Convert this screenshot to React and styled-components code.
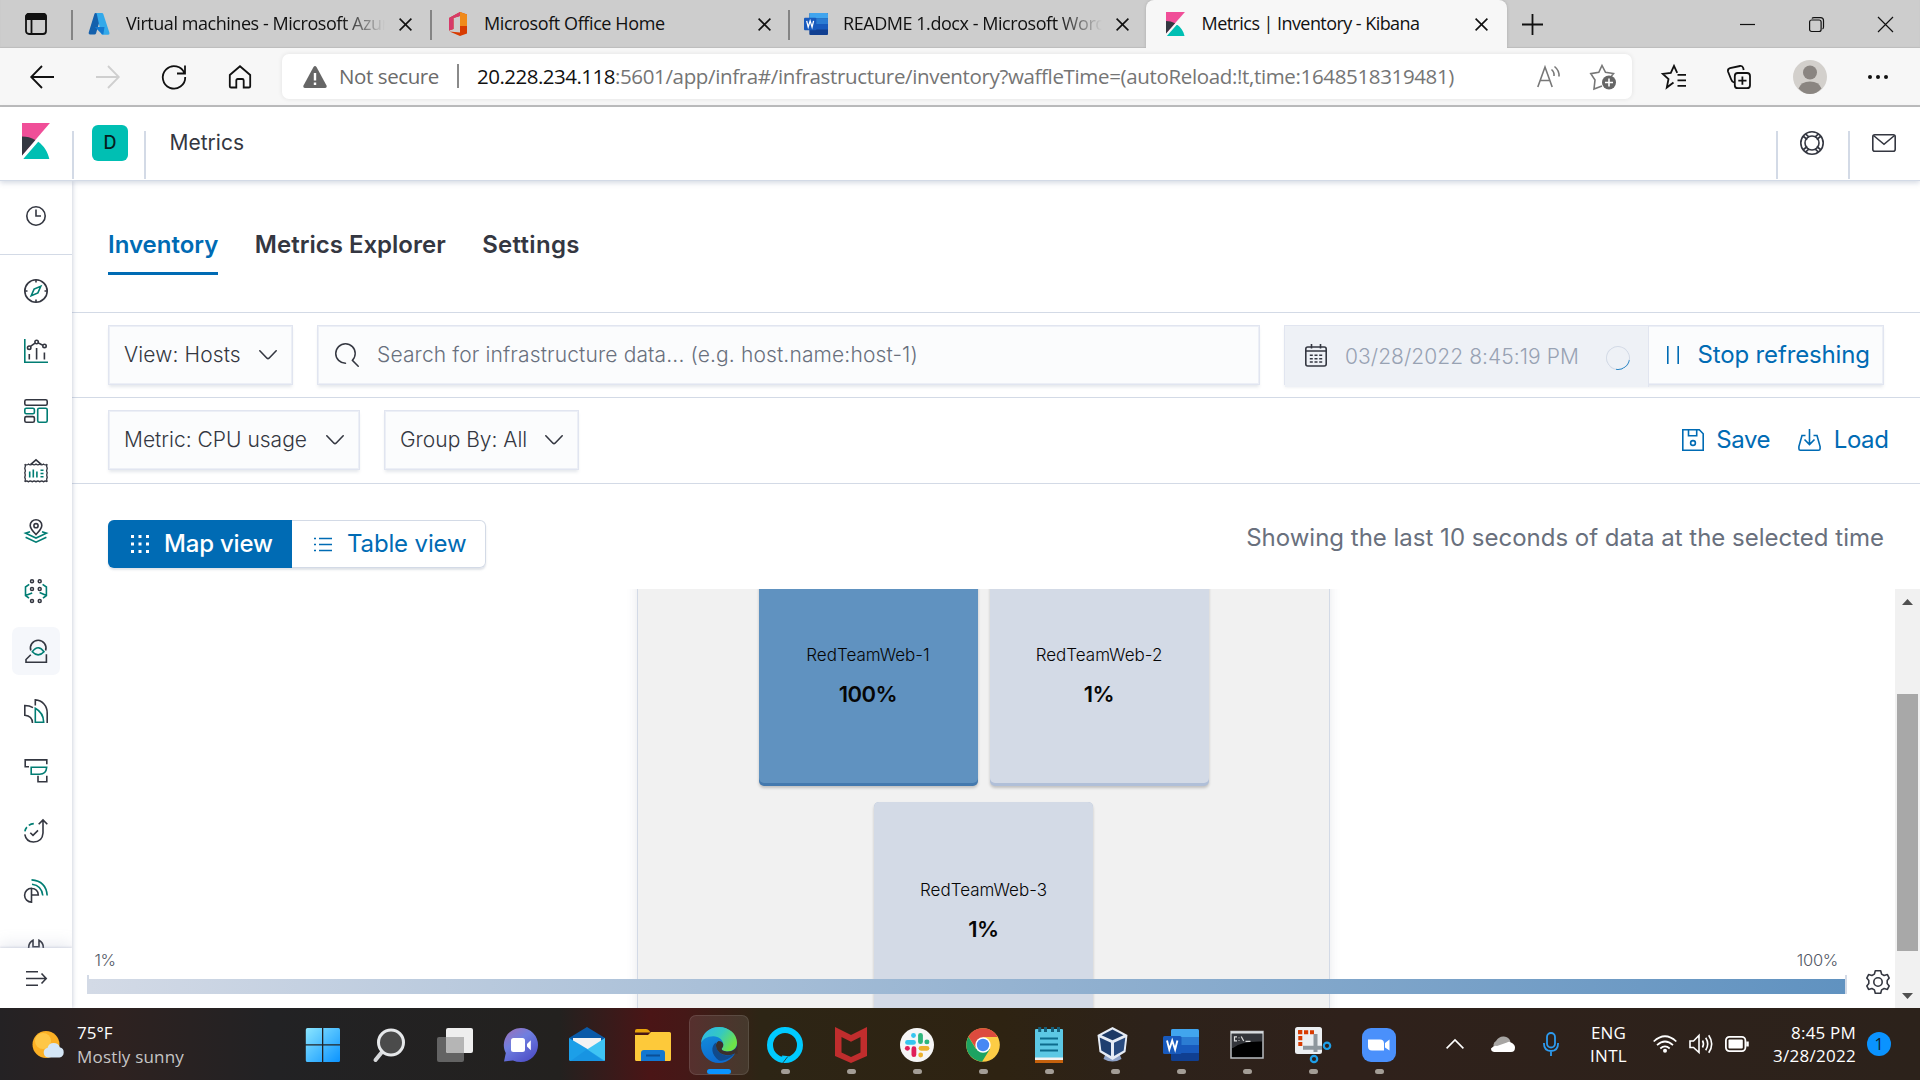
import React from "react";
import styled, { createGlobalStyle, css } from "styled-components";

const INK = "#343741";
const TEAL = "#017d73";
const BLUE = "#006bb4";
const LINE = "#d3dae6";

const GlobalStyle = createGlobalStyle`
  * { box-sizing: border-box; }
  body { margin: 0; background: #fff; overflow: hidden; }
  svg { display: block; flex: none; overflow: visible; }
`;

const Screen = styled.div`
  width: 1920px;
  height: 1080px;
  display: flex;
  flex-direction: column;
  overflow: hidden;
  font-family: Inter, "Liberation Sans", sans-serif;
  color: ${INK};
`;

const Text = styled.span`
  white-space: pre;
  font-size: ${(p) => p.$size || 21}px;
  font-weight: ${(p) => p.$weight || 400};
  letter-spacing: ${(p) => p.$ls || 0}px;
  color: ${(p) => p.$color || "inherit"};
  line-height: 1.3;
`;

/* ---------- browser chrome ---------- */
const TabStrip = styled.div`
  height: 48px;
  flex: none;
  display: flex;
  background: #cdcdcd;
  box-shadow: inset 0 -1px 1px #bdbdbd;
  font-family: "Open Sans", "Noto Sans", sans-serif;
  color: #111;
`;
const TabActions = styled.div`
  width: 71px;
  padding-left: 25px;
  display: flex;
  align-items: center;
`;
const Tab = styled.div`
  width: ${(p) => p.$w}px;
  display: flex;
  align-items: center;
  padding: 0 ${(p) => p.$pr || 18}px 0 ${(p) => p.$pl}px;
  position: relative;
  ${(p) =>
    p.$active
      ? css`
          background: #f7f7f7;
          border-radius: 8px 8px 0 0;
          box-shadow: 0 0 3px #aaa;
          clip-path: inset(0 -3px 0 -3px);
        `
      : css`
          &::before {
            content: "";
            position: absolute;
            left: 0;
            top: 10px;
            width: 2px;
            height: 30px;
            background: #848484;
          }
        `}
`;
const TabTitle = styled.div`
  flex: 1;
  min-width: 0;
  margin: 0 14px 0 ${(p) => p.$ml}px;
  overflow: hidden;
  display: flex;
  ${(p) => p.$fade && "mask-image: linear-gradient(90deg, #000 calc(100% - 44px), transparent 100%);"}
`;
const WindowButtons = styled.div`
  flex: 1;
  display: flex;
  align-items: center;
  padding-left: 15px;
`;
const Caption = styled.div`
  display: flex;
  gap: 54px;
  margin-left: auto;
  padding-right: 27px;
`;
const Toolbar = styled.div`
  height: 59px;
  flex: none;
  display: flex;
  align-items: center;
  background: #f7f7f7;
  border-bottom: 2px solid #bcbcbc;
  padding-left: 30px;
  font-family: "Open Sans", "Noto Sans", sans-serif;
`;
const NavButtons = styled.div`
  width: 252px;
  display: flex;
  gap: 42px;
  align-items: center;
`;
const AddressBar = styled.div`
  width: 1350px;
  height: 45px;
  border-radius: 7px;
  background: #fff;
  box-shadow: 0 0 5px rgba(0, 0, 0, 0.09);
  display: flex;
  align-items: center;
  padding: 0 16px 0 21px;
  color: #6b6b6b;
`;
const Url = styled.div`
  flex: 1;
  display: flex;
  align-items: center;
  margin-left: 12px;
`;
const Bar = styled.i`
  width: 2px;
  height: 24px;
  background: #8a8a8a;
  margin: 0 18px;
`;
const Push = styled.div`
  margin-left: auto;
  display: flex;
  align-items: center;
  gap: 29px;
`;
const ToolbarEnd = styled.div`
  display: flex;
  align-items: center;
  padding-left: 30px;
  gap: 41.3px;
`;

/* ---------- kibana header ---------- */
const Header = styled.header`
  height: 74px;
  flex: none;
  display: flex;
  border-bottom: 1px solid ${LINE};
  background: #fff;
  box-shadow: 0 2px 5px rgba(120, 135, 165, 0.3);
  z-index: 3;
`;
const HeaderCell = styled.div`
  width: ${(p) => p.$w}px;
  display: flex;
  justify-content: center;
  height: 72px;
  align-items: center;
  padding: ${(p) => p.$pad || "0"};
  ${(p) =>
    p.$line &&
    css`
      border-left: 2px solid transparent;
      border-image: linear-gradient(transparent 24px, ${LINE} 24px) 1;
    `}
`;
const Space = styled.div`
  width: 36px;
  height: 36px;
  border-radius: 6px;
  background: #00bfb3;
  color: #06201f;
  display: flex;
  align-items: center;
  justify-content: center;
`;
const Crumb = styled.div`
  flex: 1;
  display: flex;
  align-items: center;
  height: 72px;
  padding-left: 23.5px;
  border-left: 2px solid transparent;
  border-image: linear-gradient(transparent 24px, ${LINE} 24px) 1;
`;

/* ---------- body ---------- */
const Body = styled.div`
  flex: 1;
  min-height: 0;
  display: flex;
`;
const SideNav = styled.nav`
  width: 72px;
  flex: none;
  display: flex;
  flex-direction: column;
  background: #fff;
  box-shadow: 1px 0 4px rgba(120, 135, 165, 0.35);
  z-index: 2;
  overflow: hidden;
  clip-path: inset(0 -8px 0 0);
`;
const Recent = styled.div`
  height: 74px;
  flex: none;
  border-bottom: 1px solid ${LINE};
  display: flex;
  justify-content: center;
  padding: 25px 1px 0 0;
`;
const NavList = styled.div`
  flex: 1;
  min-height: 0;
  overflow: hidden;
  padding-top: 12px;
  display: flex;
  flex-direction: column;
  align-items: center;
  gap: 12px;
`;
const NavItem = styled.div`
  width: 48px;
  height: 48px;
  flex: none;
  border-radius: 7px;
  background: ${(p) => (p.$active ? "#f5f7fb" : "none")};
  display: flex;
  align-items: center;
  justify-content: center;
`;
const NavToggle = styled.div`
  height: 60px;
  flex: none;
  display: flex;
  align-items: center;
  justify-content: center;
  background: #fff;
  box-shadow: 0 -4px 14px rgba(150, 160, 185, 0.22), 0 -1px 2px rgba(150, 160, 185, 0.3);
`;
const Main = styled.main`
  flex: 1;
  min-width: 0;
  display: flex;
  flex-direction: column;
`;
const PageTabs = styled.div`
  height: 132px;
  flex: none;
  border-bottom: 1px solid ${LINE};
  padding: 31px 0 0 36px;
  display: flex;
  gap: 36.5px;
`;
const PageTab = styled.div`
  height: 63px;
  padding-top: 17px;
  color: ${(p) => (p.$active ? BLUE : INK)};
  border-bottom: 3px solid ${(p) => (p.$active ? BLUE : "transparent")};
`;
const ControlRow = styled.div`
  height: ${(p) => p.$h}px;
  flex: none;
  border-bottom: 1px solid ${LINE};
  padding: 12px ${(p) => p.$pr}px 0 36px;
  display: flex;
  align-items: flex-start;
  gap: 24px;
`;
const field = css`
  height: 60px;
  border: 1px solid #e1e5f0;
  box-shadow: inset 0 0 0 1px #eceff6, 0 3px 3px -1px rgba(152, 162, 179, 0.25);
  background: #fbfcfd;
  display: flex;
  align-items: center;
`;
const Select = styled.div`
  ${field}
  width: ${(p) => p.$w}px;
  padding: 0 15.5px 0 15px;
  justify-content: space-between;
`;
const Search = styled.div`
  ${field}
  width: 943px;
  padding-left: 17px;
  gap: 18px;
`;
const DatePicker = styled.div`
  ${field}
  width: 600px;
  margin-left: auto;
`;
const DateValue = styled.div`
  width: 364px;
  height: 61px;
  align-self: flex-start;
  background: #eef1f6;
  display: flex;
  align-items: center;
  padding: 0 18px 2px 20px;
  gap: 18px;
  border-right: 1px solid #e1e5f0;
  & > span { margin-top: 3px; }
`;
const Spinner = styled.i`
  width: 24px;
  height: 24px;
  border-radius: 50%;
  border: 1.5px solid #d3dae6;
  border-bottom-color: #2b86c5;
  transform: rotate(-35deg);
  margin: 4px 0 0 auto;
`;
const StopButton = styled.div`
  flex: 1;
  display: flex;
  align-items: center;
  padding-left: 18px;
  gap: 18.5px;
  color: ${BLUE};
`;
const LinkButtons = styled.div`
  height: 60px;
  margin-left: auto;
  display: flex;
  align-items: center;
  color: ${BLUE};
  gap: 28px;
`;
const LinkButton = styled.div`
  display: flex;
  align-items: center;
  gap: 12.5px;
`;
const ViewRow = styled.div`
  height: 105px;
  flex: none;
  display: flex;
  padding: 36px 36px 0 36px;
  justify-content: space-between;
`;
const ButtonGroup = styled.div`
  height: 48px;
  width: 378px;
  display: flex;
  border-radius: 6px;
  overflow: hidden;
  box-shadow: inset 0 0 0 1px ${LINE}, 0 2px 2px rgba(152, 162, 179, 0.3);
`;
const GroupButton = styled.div`
  width: ${(p) => p.$w}px;
  display: flex;
  align-items: center;
  gap: 15px;
  padding-left: ${(p) => p.$pl}px;
  background: ${(p) => (p.$on ? BLUE : "transparent")};
  color: ${(p) => (p.$on ? "#fff" : BLUE)};
`;
const Hint = styled.div`
  padding-top: 2px;
  color: #69707d;
`;

/* ---------- waffle map ---------- */
const MapArea = styled.div`
  flex: 1;
  min-height: 0;
  display: flex;
  position: relative;
`;
const MapScroll = styled.div`
  flex: 1;
  overflow: hidden;
  display: flex;
  justify-content: center;
`;
const Group = styled.div`
  width: 693px;
  height: 620px;
  margin-top: -60px;
  padding: 37px 120px 0;
  background: #f1f1f1;
  border: 1px solid ${LINE};
  box-shadow: 0 0 10px rgba(120, 130, 150, 0.18);
  display: flex;
  flex-wrap: wrap;
  justify-content: center;
  align-content: flex-start;
  gap: 16px 12px;
`;
const Node = styled.div`
  width: 219px;
  height: 219px;
  border-radius: 5px;
  background: ${(p) => p.$edge};
  box-shadow: 0 2px 3px rgba(0, 0, 0, 0.2);
  padding-bottom: 3px;
`;
const NodeFace = styled.div`
  height: 216px;
  border-radius: 5px;
  background: ${(p) => p.$fill};
  color: #060606;
  display: flex;
  flex-direction: column;
  align-items: center;
  padding-top: 77px;
  gap: 14px;
`;
const ScrollTrack = styled.div`
  width: 25px;
  background: #f1f1f1;
  display: flex;
  flex-direction: column;
  align-items: center;
  padding: 10px 0 9px;
`;
const Thumb = styled.div`
  width: 21px;
  height: 257px;
  margin: 89px 0 auto;
  background: #a8a8a8;
`;
const Legend = styled.div`
  position: absolute;
  left: 15px;
  bottom: 14px;
  width: 1804px;
  display: flex;
  align-items: flex-end;
  gap: 19px;
`;
const Scale = styled.div`
  width: 1760px;
`;
const ScaleLabels = styled.div`
  display: flex;
  justify-content: space-between;
  padding: 0 9px 4px 7.5px;
  color: #535966;
`;
const ScaleBar = styled.div`
  height: 19px;
  border: 2px solid ${LINE};
  border-width: 0 2px;
  padding-top: 4px;
  &::after {
    content: "";
    display: block;
    height: 15px;
    background: linear-gradient(90deg, #d3dae6, #92b1d0 55%, #6092c0);
  }
`;

/* ---------- taskbar ---------- */
const Taskbar = styled.footer`
  height: 72px;
  flex: none;
  display: flex;
  background: linear-gradient(
    90deg,
    #242224 0,
    #2e2220 110px,
    #222224 270px,
    #23211f 560px,
    #4a1516 650px,
    #451817 685px,
    #2d2515 760px,
    #2e2312 1000px,
    #2d221a 1150px,
    #2f211b 1350px,
    #2c221b 1920px
  );
  font-family: "Open Sans", "Noto Sans", sans-serif;
  color: #fff;
`;
const Weather = styled.div`
  width: 290px;
  display: flex;
  align-items: center;
  padding: 1px 0 0 31px;
  gap: 12px;
`;
const Lines = styled.div`
  display: flex;
  flex-direction: column;
  align-items: ${(p) => p.$align || "flex-start"};
  & > span { line-height: ${(p) => p.$lh || 23}px; }
`;
const Apps = styled.div`
  display: flex;
`;
const TaskApp = styled.div`
  width: 66px;
  padding: 7px 3px 5px;
`;
const AppTile = styled.div`
  width: 60px;
  height: 60px;
  border-radius: 7px;
  display: flex;
  flex-direction: column;
  align-items: center;
  padding-top: 12px;
  gap: 6px;
  ${(p) => p.$focus && "background: rgba(255,255,255,.1); box-shadow: inset 0 0 0 1px rgba(255,255,255,.1);"}
`;
const Glyph = styled.div`
  height: 36px;
  display: flex;
  align-items: center;
`;
const Pip = styled.i`
  width: ${(p) => (p.$focus ? 24 : 9)}px;
  height: 5px;
  border-radius: 3px;
  background: ${(p) => (p.$focus ? "#0a93ff" : "#a39d96")};
`;
const Tray = styled.div`
  flex: 1;
  display: flex;
  align-items: center;
  padding-left: 34px;
`;
const TrayItem = styled.div`
  margin-left: ${(p) => p.$ml}px;
`;
const Badge = styled.div`
  width: 24px;
  height: 24px;
  margin-left: 11px;
  border-radius: 50%;
  background: #0a93ff;
  color: #10202c;
  display: flex;
  align-items: center;
  justify-content: center;
`;

/* ---------- icons ---------- */
const Svg = ({ w = 24, h = w, c = INK, sw = 1.6, children }) => (
  <svg width={w} height={h} viewBox={`0 0 ${w} ${h}`} fill="none" stroke={c} strokeWidth={sw}>
    {children}
  </svg>
);

const KibanaLogo = ({ w, h }) => (
  <svg width={w} height={h} viewBox="4 0 25 32" preserveAspectRatio="none">
    <path fill="#f04e98" d="M4 0v28.789L28.935.017z" />
    <path fill="#343741" d="M4 12v16.789l11.906-13.738A24.721 24.721 0 004 12" />
    <path fill="#00bfb3" d="M18.479 16.664L6.268 30.754l-1.073 1.237h23.191c-1.252-6.292-4.883-11.719-9.908-15.327" />
  </svg>
);

const Chevron = () => (
  <Svg w={18} h={10} sw={1.6}>
    <path d="M.8.8 8 8.2q1 .9 2 0L17.2.8" strokeLinecap="round" />
  </Svg>
);

const Close = () => (
  <Svg w={13} c="#111" sw={1.6}>
    <path d="M.6.6l11.8 11.8M12.4.6L.6 12.4" />
  </Svg>
);

const WordLogo = ({ w, h }) => (
  <svg width={w} height={h} viewBox="0 0 36 32" preserveAspectRatio="none">
    <rect x="8" width="28" height="32" rx="1.5" fill="#103f91" />
    <path d="M8 1.5Q8 0 9.500 0h25Q36 0 36 1.500V8H8z" fill="#41a5ee" />
    <path d="M8 8h28v8H8z" fill="#2b7cd3" />
    <path d="M8 16h28v8H8z" fill="#185abd" />
    <rect y="7" width="18.500" height="18" rx="1.500" fill="#185abd" />
    <path d="M4 11.500l2.300 9 2.900-9 2.900 9 2.300-9" stroke="#fff" strokeWidth="1.900" fill="none" />
  </svg>
);

const navIcons = [
  <Svg key="discover">
    <circle cx="12" cy="12" r="11.200" />
    <path d="M12 .8v2.700M12 20.500v2.700M.8 12h2.700M20.500 12h2.700" />
    <path stroke={TEAL} d="M16.800 7.200l-2.900 6.700-6.700 2.900 2.900-6.700z" />
  </Svg>,
  <Svg key="visualize">
    <path stroke={TEAL} d="M.8 0v23.200H24" />
    <path d="M5.300 15v5.500M12.600 9v11.500M20.400 13.500v7M6.500 7.300l4.500-3.200M14.200 3.900l4.600 2.400" />
    <circle cx="5.200" cy="8.700" r="1.700" />
    <circle cx="12.600" cy="3" r="1.700" />
    <circle cx="20.500" cy="6.900" r="1.700" />
  </Svg>,
  <Svg key="dashboard">
    <rect x=".8" y=".8" width="22.400" height="5.400" rx="1.500" />
    <rect x=".8" y="9.200" width="9.600" height="5.600" rx="1.500" stroke={TEAL} />
    <rect x="13.700" y="9.200" width="9.500" height="14" rx="1.500" stroke={TEAL} />
    <rect x=".8" y="17.600" width="9.600" height="5.600" rx="1.500" />
  </Svg>,
  <Svg key="canvas">
    <path d="M6.500 5.700L12 .9l5.500 4.800" />
    <path d="M.8 5.200q1.800 1.300 3.600 0 1.900 1.300 3.800 0 1.900 1.300 3.800 0 1.900 1.300 3.800 0 1.900 1.300 3.800 0 1.800 1.300 3.600 0-1.300 2 0 4-1 2.300 0 4.600-1 2.300 0 4.600-1.300 2 0 4.400-1.800-1.500-3.600 0-1.900-1.500-3.800 0-1.900-1.500-3.800 0-1.900-1.500-3.800 0-1.900-1.500-3.800 0-1.800-1.500-3.600 0 1.300-2.400 0-4.400 1-2.300 0-4.600 1-2.300 0-4.600 1.300-2 0-4z" strokeWidth="1.400" />
    <path stroke={TEAL} d="M5.700 12.500v6M9.300 10.500v8M12.900 12.500v6M16.500 11.200h3M16.500 14.500h3M16.500 17.700h3" />
  </Svg>,
  <Svg key="maps">
    <path d="M12 15.500C8.500 12 6.200 9.400 6.200 6.500a5.800 5.800 0 0111.600 0c0 2.900-2.300 5.500-5.800 9z" />
    <circle cx="12" cy="6.700" r="2.100" />
    <path stroke={TEAL} d="M6 12.800L1.600 14.200 12 19l10.400-4.800L18 12.800M1.600 18.200L12 23.200l10.400-5" />
  </Svg>,
  <Svg key="ml">
    {[2.3, 10, 22].map((y) =>
      [8, 15.7].map((x) => <circle key={x + "-" + y} cx={x} cy={y} r="1.500" strokeWidth="1.500" />)
    )}
    <path stroke={TEAL} d="M5.200 5.300L1.500 8v8.500L5 19.200M1.500 16.500l6.700-2.600M18.600 5.300L22.400 8v8.500L19 19.200M22.400 16.500L15.600 13.500" />
  </Svg>,
  <Svg key="metrics">
    <path d="M6.800 11.500A7.800 7.800 0 1121.600 11.500M6.800 15.800l-4.800 4.700v2.700h20.400V15.300" />
    <path stroke={TEAL} d="M8.300 12.700q5.900-8 11.700 0-5.800 6.300-11.700 0z" />
  </Svg>,
  <Svg key="logs">
    <path d="M9 8.600Q5.500 6.500.8 6.500v9.800Q8.300 17 8.500 24M11.300 6.500V.9C18.500 1.300 23.200 7 23.200 14v10" />
    <path stroke={TEAL} d="M11.300 9.300q8.200 4.500 8.400 13.900h-8.400z" />
  </Svg>,
  <Svg key="apm">
    <path d="M5 7.800H1.200V.9h21.600v4.300M14 16.800v6h8.800v-6" />
    <path stroke={TEAL} d="M7.200 8.200h15.500q-.5 7-7.200 7H7.200z" />
  </Svg>,
  <Svg key="uptime">
    <path d="M14.700 5.300L19 1l4.300 4.300M19 1v13q-.6 8.800-9.500 9Q2 22.600.8 15.300M6.300 13.700l2.700 2.700 5-5" />
    <path stroke={TEAL} d="M.9 12.300q.5-2.500 2-4.200M4.800 6.400Q7 4.800 9.800 4.600" />
  </Svg>,
  <Svg key="siem">
    <path d="M7.500 9.300a6.800 6.800 0 100 13.800zM7.500 9.300q6.500.5 6.800 6.700H7.500" />
    <path stroke={TEAL} d="M7.500.9Q22 2 23.200 16.500M8 5.200q9.700 1.200 10.800 11.300" />
  </Svg>,
  <Svg key="management">
    <path d="M5 12q-1.500-8 4-10.700v6.400h6V1.300q5.500 2.700 4 10.700" />
  </Svg>,
];

const appIcons = [
  /* start */
  <svg key="start" width="36" height="36" viewBox="0 0 36 36">
    <defs>
      <linearGradient id="win" x2="1" y2="1"><stop stopColor="#8be6ff" /><stop offset="1" stopColor="#0a93ff" /></linearGradient>
    </defs>
    <path fill="url(#win)" d="M2.500 1H17v16.200H.8V2.700Q.8 1 2.500 1zM18.300 1h15.200q1.500 0 1.500 1.700v14.500H18.300zM.8 18.600H17V35H2.500Q.8 35 .8 33.500zM18.300 18.600H35v14.900q0 1.500-1.500 1.500H18.300z" />
  </svg>,
  /* search */
  <svg key="search" width="36" height="36" viewBox="0 0 36 36">
    <path d="M11 25L4.500 33" stroke="#d6d8da" strokeWidth="4" strokeLinecap="round" />
    <circle cx="20" cy="15.500" r="12.500" fill="#4b4b4b" stroke="#e6e8ea" strokeWidth="3" />
  </svg>,
  /* task view */
  <svg key="tasks" width="36" height="36" viewBox="0 0 36 36">
    <rect x="0" y="10" width="27" height="25" rx="2" fill="#636363" />
    <rect x="9" y="1" width="27" height="25" rx="2" fill="#eee" />
    <path d="M9 10h18v16H11q-2 0-2-2z" fill="#b5b5b5" />
  </svg>,
  /* chat */
  <svg key="chat" width="36" height="36" viewBox="0 0 36 36">
    <defs>
      <linearGradient id="cht" x2=".7" y2="1"><stop stopColor="#a06fb5" /><stop offset=".45" stopColor="#6f7fe0" /><stop offset="1" stopColor="#4f50c8" /></linearGradient>
    </defs>
    <path fill="url(#cht)" d="M18 1a17 17 0 110 34q-4.500 0-8-1.500L1 34.500 2.800 26A17 17 0 0118 1z" />
    <rect x="8" y="11" width="14" height="14" rx="2.500" fill="#fff" />
    <path d="M24 17l3.800-3.800v10L24 19.500z" fill="#fff" />
  </svg>,
  /* mail */
  <svg key="mail" width="36" height="36" viewBox="0 0 36 36">
    <path d="M0 11L18 0l18 11v6H0z" fill="#0a5aa8" />
    <path d="M4 11h28v8L18 26 4 19z" fill="#f3f3f3" />
    <path d="M0 11l36 21.500q0 1.500-1.500 1.500h-33Q0 34 0 32.500z" fill="#1c9fe8" />
    <path d="M36 11L18 22.500 34.500 34q1.500 0 1.500-1.500z" fill="#3fc4f4" />
    <path d="M18 22.300L36 34H1.500z" fill="#1590e0" opacity=".7" />
  </svg>,
  /* files */
  <svg key="files" width="36" height="36" viewBox="0 0 36 36">
    <path d="M0 4q0-2 2-2h9q2 0 3.500 2l1 1.500H0z" fill="#e8a30a" />
    <path d="M0 8h13l3-3h18.500q1.500 0 1.500 1.500v26q0 1.500-1.500 1.500h-33Q0 34 0 32.500z" fill="#fdc93a" />
    <path d="M6 34v-8q0-3 3-3h18q3 0 3 3v8z" fill="#1277d1" />
    <path d="M11 28.500h14" stroke="#0b4f96" strokeWidth="2" />
  </svg>,
  /* edge */
  <svg key="edge" width="36" height="36" viewBox="0 0 36 36">
    <defs>
      <linearGradient id="e1" x2="1" y2=".5"><stop stopColor="#2cb4ee" /><stop offset=".55" stopColor="#35c9c0" /><stop offset="1" stopColor="#6ee348" /></linearGradient>
      <linearGradient id="e2" x2=".3" y2="1"><stop stopColor="#1494dd" /><stop offset="1" stopColor="#0d6cd0" /></linearGradient>
    </defs>
    <circle cx="18" cy="18" r="18" fill="url(#e2)" />
    <path d="M0 16C1 6 9 0 18 0c10 0 18 7 18 15.500C36 21 32 24.500 27 24.500c-3.500 0-6.300-1-6.300-2.500 0-1 1.600-1.500 1.600-4.300 0-4.500-4.300-8.400-10-8.400C6 9.300 1.500 12.500 0 16z" fill="url(#e1)" />
    <path d="M15 15.500C9.500 19 10 28 18 33.500q7 1.500 15.500-6.500-5.500 2.600-11.500.6c-5-1.700-7.600-6.500-7-12.100z" fill="#114a8b" />
    <path d="M36.500 17v9.700l-2.700-.2q-5 2.800-11.500.9c-5-1.500-7.500-5.500-7.300-9.700q.3-2.600 2.500-3.600 4.500.3 4.800 3.600c0 2.800-1.600 3.300-1.600 4.300 0 1.500 2.800 2.500 6.300 2.500 5 0 9-3.500 9.500-7.500z" fill="#3b302b" />
  </svg>,
  /* alexa */
  <svg key="alexa" width="36" height="36" viewBox="0 0 36 36">
    <circle cx="18" cy="18" r="15" fill="none" stroke="#00caff" strokeWidth="6" />
    <path d="M15 28.500l7 .8-5.800 6.800z" fill="#00caff" />
    <path d="M20.800 29.500L15.900 35.900" stroke="#2d2515" strokeWidth=".8" />
  </svg>,
  /* mcafee */
  <svg key="mcafee" width="36" height="36" viewBox="0 0 36 36">
    <path fill="#c02d2d" fillRule="evenodd" d="M2 0l16 8 16-8v29l-16 7-16-7zM8.500 10v15.500L18 30l9.500-4.500V10L18 14.800z" />
  </svg>,
  /* slack */
  <svg key="slack" width="36" height="36" viewBox="0 0 36 36">
    <circle cx="18" cy="18" r="17" fill="#f6f6f6" />
    <g fill="none" strokeWidth="4.800" strokeLinecap="round">
      <path d="M8.500 15.400h6" stroke="#36c5f0" /><path d="M14.500 8.300v.2" stroke="#36c5f0" />
      <path d="M21.500 8.300v6.400" stroke="#2eb67d" /><path d="M28 14.900h-.2" stroke="#2eb67d" />
      <path d="M14.900 21.700v6" stroke="#e01e5a" /><path d="M8.300 21.300h.2" stroke="#e01e5a" />
      <path d="M22 21.300h6" stroke="#ecb22e" /><path d="M21.700 27.900v.1" stroke="#ecb22e" />
    </g>
  </svg>,
  /* chrome */
  <svg key="chrome" width="36" height="36" viewBox="0 0 36 36">
    <circle cx="18" cy="18" r="16.800" fill="#fdcc45" />
    <path d="M3.400 9.700A16.800 16.800 0 0132.700 10H18l-6.500 12z" fill="#dd4b3e" />
    <path d="M3.400 9.700a16.800 16.800 0 0013.600 25L25 22H11z" fill="#1da362" />
    <circle cx="18" cy="18" r="7.700" fill="#fff" />
    <circle cx="18" cy="18" r="6.200" fill="#4688f4" />
  </svg>,
  /* notepad */
  <svg key="notepad" width="36" height="36" viewBox="0 0 36 36">
    <path d="M4 31h28v5H4z" fill="#c4610c" />
    <path d="M4 30h28v3H4z" fill="#f3f3f3" />
    <path d="M4 3q0-1 1-1h26q1 0 1 1v27.500H4z" fill="#5cc8e4" />
    <path d="M9 11.500h18M9 17.500h18M9 23.500h18" stroke="#0c6b8c" strokeWidth="2" />
    <path d="M8.700 0v5M14.500 0v5M21.500 0v5M27.500 0v5" stroke="#14607c" strokeWidth="3" />
  </svg>,
  /* virtualbox */
  <svg key="vbox" width="36" height="36" viewBox="2.500 0 36 36">
    <path d="M11 27h14l2 5q-9 5-18 0z" fill="#8fa3c8" />
    <path d="M18 0l15 8-2 17-13 8L5 25 3 8z" fill="#e6ecf5" />
    <path d="M18 2.500l11 5.700-11 5-11-5z" fill="#1d3a66" />
    <path d="M5.200 10.500l11.300 5.300V29L6.800 23.500z" fill="#1f3f70" />
    <path d="M30.800 10.500l-11.300 5.300V29l9.700-5.500z" fill="#2a4c80" />
  </svg>,
  <WordLogo key="word" w={36} h={32} />,
  /* terminal */
  <svg key="cmd" width="36" height="36" viewBox="0 0 36 36">
    <rect x="2" y="4.500" width="32" height="26.500" fill="#000" stroke="#b8bcc0" strokeWidth="1.500" />
    <path d="M3 6.500h30v8Q12 14 4 21H3z" fill="#33353a" />
    <path d="M2 5.500h32" stroke="#d8dcdf" strokeWidth="2.200" />
    <path d="M8 9.800H5.500v4H8M10 10.500v.8M10 13v.8M12.200 9.500l2.500 4.500M16.500 14.300h5" stroke="#ddd" strokeWidth="1.200" fill="none" />
  </svg>,
  /* snip */
  <svg key="snip" width="36" height="36" viewBox="0 0 36 36">
    <rect x="0" y="0" width="27" height="27" rx="2.500" fill="#eceff2" />
    <path d="M3 5.300h16M5.300 3v16" stroke="#d83b01" strokeWidth="4" strokeDasharray="4.200 1.800" />
    <path d="M20.500 7v18M8 20.700h19" stroke="#8e979e" strokeWidth="4" />
    <circle cx="32" cy="18.800" r="3.200" fill="none" stroke="#1e9fe8" strokeWidth="2.200" />
    <circle cx="19" cy="32" r="3.200" fill="none" stroke="#1e9fe8" strokeWidth="2.200" />
  </svg>,
  /* zoom */
  <svg key="zoom" width="36" height="36" viewBox="0 0 36 36">
    <rect x="1" y="1" width="34" height="34" rx="9" fill="#4a90fb" />
    <path d="M7 12.500h12q4 0 4 4v7H11q-4 0-4-4zM24 16l4.500-3.500v11L24 20.500z" fill="#fff" />
  </svg>,
];

const Tile = ({ name, value, fill, edge }) => (
  <Node $edge={edge}>
    <NodeFace $fill={fill}>
      <Text $size={17} $weight={350}>{name}</Text>
      <Text $size={22} $weight={600} $ls={-0.5}>{value}</Text>
    </NodeFace>
  </Node>
);

export default function App() {
  return (
    <Screen>
      <GlobalStyle />
      <TabStrip>
        <TabActions>
          <Svg w={22} c="#111" sw={1.8}>
            <rect x="1" y="1" width="20" height="20" rx="3" />
            <path d="M1 4.500Q1 1 4 1h14q3 0 3 3.500V6H1z" fill="#111" />
            <path d="M6.500 6v15" />
          </Svg>
        </TabActions>
        <Tab $w={359} $pl={17}>
          <svg width="22" height="22" viewBox="0 0 22 22">
            <path d="M7.500 0h6.500L8 20.500q-.4 1-1.500 1H2Q.3 21.300.7 19.500L6.400 1Q6.700 0 7.500 0z" fill="#1460ac" />
            <path d="M14 0q1 0 1.300 1l6.200 19q.2 1.500-1.200 1.700h-5.500q-1.300 0-1.800-1.200L8.800 1Q8.500 0 7.500 0z" fill="#33a9ea" />
            <path d="M16.500 14H6.800l6.500 6.500q1 1 2 1.100z" fill="#1478cf" />
          </svg>
          <TabTitle $ml={16} $fade>
            <Text $size={18} $ls={-0.45}>Virtual machines - Microsoft Azure</Text>
          </TabTitle>
          <Close />
        </Tab>
        <Tab $w={358} $pl={18.5} $pr={17}>
          <svg width="18" height="24" viewBox="0 0 18 24">
            <path d="M0 6L11 0l7 2.500v19L11 24 .5 19.500 11 20.500V4L4.500 6v11L0 18.500z" fill="#d83b01" />
            <path d="M0 6L11 0v4L4.500 6v11L0 18.500z" fill="#d63a6a" />
            <path d="M11 0l7 2.500V14h-7z" fill="#f08a1a" />
          </svg>
          <TabTitle $ml={17.5}>
            <Text $size={18} $ls={-0.4}>Microsoft Office Home</Text>
          </TabTitle>
          <Close />
        </Tab>
        <Tab $w={358} $pl={16} $pr={17}>
          <WordLogo w={24} h={22} />
          <TabTitle $ml={15} $fade>
            <Text $size={18} $ls={-0.45}>README 1.docx - Microsoft Word</Text>
          </TabTitle>
          <Close />
        </Tab>
        <Tab $w={361} $pl={20} $pr={19} $active>
          <KibanaLogo w={19} h={24} />
          <TabTitle $ml={16.500}>
            <Text $size={18} $ls={-0.56}>Metrics | Inventory - Kibana</Text>
          </TabTitle>
          <Close />
        </Tab>
        <WindowButtons>
          <Svg w={21} c="#111" sw={1.800}><path d="M10.500 0v21M0 10.500h21" /></Svg>
          <Caption>
            <Svg w={15} c="#111" sw={1.200}><path d="M0 7.500h15" /></Svg>
            <Svg w={15} c="#111" sw={1.200}>
              <rect x=".6" y="3" width="11.500" height="11.500" rx="2" />
              <path d="M3 1.500Q3.500.6 5 .6h6.500q3 0 3 3V10q0 1.500-1 2" />
            </Svg>
            <Svg w={15} c="#111" sw={1.200}><path d="M0 0l15 15M15 0L0 15" /></Svg>
          </Caption>
        </WindowButtons>
      </TabStrip>

      <Toolbar>
        <NavButtons>
          <Svg c="#111" sw={1.800}><path d="M24 12H1.500M12 1L1.200 12 12 23" /></Svg>
          <Svg c="#cfcfcf" sw={1.800}><path d="M0 12h22.500M12 1l10.800 11L12 23" /></Svg>
          <Svg c="#111" sw={1.800}><path d="M22.500 8.500A11.200 11.200 0 1023.200 12M23 .5v8h-8" /></Svg>
          <Svg c="#111" sw={1.800}>
            <path d="M1.800 10L12 1.200 22.200 10v11.200q0 1.300-1.300 1.300h-5.200v-7q0-1.500-1.500-1.500H9.800q-1.500 0-1.500 1.500v7H3.100q-1.300 0-1.300-1.300z" />
          </Svg>
        </NavButtons>
        <AddressBar>
          <Svg w={24} h={22} c="none">
            <path fill="#666" d="M10.500 1q1.500-2 3 0l10 18.500q.8 2.300-1.500 2.500H2Q-.3 21.800.5 19.500z" />
            <path stroke="#fff" strokeWidth="2.400" d="M12 7v7.500M12 16.500V19" />
          </Svg>
          <Url>
            <Text $size={20.5} $ls={-0.4}>Not secure</Text>
            <Bar />
            <Text $size={20.5} $ls={-0.51} $color="#111">20.228.234.118</Text>
            <Text $size={20.5} $ls={-0.35} $color="#757575">:5601/app/infra#/infrastructure/inventory?waffleTime=(autoReload:!t,time:1648518319481)</Text>
          </Url>
          <Push>
            <Svg c="#777" sw={1.600}>
              <path d="M.8 22L8 2l7.200 20M3.200 15.500h9.600M14.500 4.500q3 2.500 2.500 6.500M17.500 1.500q5 4 4.500 10" />
            </Svg>
            <Svg w={26} c="#777" sw={1.600}>
              <path d="M12 22l-8 3 1-9L.8 9.700l8-1.400L12 1.500l3.500 6.800 8 1.200-2 2.500" />
              <circle cx="19" cy="18.500" r="7" fill="#666" stroke="none" />
              <path d="M19 14.500v8M15 18.500h8" stroke="#fff" />
            </Svg>
          </Push>
        </AddressBar>
        <ToolbarEnd>
          <Svg c="#111" sw={1.800}>
            <path d="M11.500 17.500L4.800 22.500 6.500 14 .8 8.800l8-1L12 .9l3.200 6.900M15.500 9.800H24M15.500 15.300H24M15.500 20.800H24" />
          </Svg>
          <Svg c="#111" sw={1.800}>
            <path d="M7 17.500Q5 17 4.200 14.500L1 6.500Q.5 4 3 3.200L13 1q2.500-.3 3.200 2l.5 2" />
            <rect x="7.800" y="8" width="15.200" height="15.200" rx="3" />
            <path d="M15.400 11.500v8.200M11.300 15.600h8.200" />
          </Svg>
          <svg width="34" height="34" viewBox="0 0 34 34">
            <circle cx="17" cy="17" r="17" fill="#d3d0cc" />
            <circle cx="17" cy="12.500" r="7" fill="#8a8581" />
            <path d="M5.500 28.500q2.500-7 11.500-7t11.500 7q-5 5.500-11.500 5.500T5.500 28.500z" fill="#8a8581" />
          </svg>
          <Svg w={20} h={4} c="none">
            <g fill="#111"><circle cx="2" cy="2" r="2" /><circle cx="10" cy="2" r="2" /><circle cx="18" cy="2" r="2" /></g>
          </Svg>
        </ToolbarEnd>
      </Toolbar>

      <Header>
        <HeaderCell $w={72} $pad="0 0 4px"><KibanaLogo w={28} h={36} /></HeaderCell>
        <HeaderCell $w={72} $line $pad="0 0 0 2px">
          <Space><Text $size={18} $weight={500}>D</Text></Space>
        </HeaderCell>
        <Crumb><Text $size={21}>Metrics</Text></Crumb>
        <HeaderCell $w={72} $line $pad="0 2px 0 0">
          <Svg>
            <circle cx="12" cy="12" r="11.200" /><circle cx="12" cy="12" r="7" />
            <path d="M3.500 5.500l3.800 3M5.800 3.200l3.200 3M20.500 5.500l-3.800 3M18.200 3.200l-3.200 3M3.500 18.500l3.800-3M5.800 20.800l3.200-3M20.500 18.500l-3.800-3M18.200 20.800l-3.200-3" />
          </Svg>
        </HeaderCell>
        <HeaderCell $w={72} $line $pad="0 2px 0 0">
          <Svg w={24} h={18}>
            <rect x=".8" y=".8" width="22.400" height="16.400" rx="2" /><path d="M1.500 1.500L12 10.300 22.500 1.500" />
          </Svg>
        </HeaderCell>
      </Header>

      <Body>
        <SideNav>
          <Recent>
            <Svg w={20}><circle cx="10" cy="10" r="9.200" /><path d="M10 3.500V10h5" /></Svg>
          </Recent>
          <NavList>
            {navIcons.map((icon, i) => (
              <NavItem key={i} $active={i === 6}>{icon}</NavItem>
            ))}
          </NavList>
          <NavToggle>
            <Svg w={21} h={15}><path d="M0 .8h12M0 7.500h19.500M0 14.200h12M15.500 2.500l4.700 5-4.700 5" /></Svg>
          </NavToggle>
        </SideNav>

        <Main>
          <PageTabs>
            <PageTab $active><Text $size={24} $weight={600}>Inventory</Text></PageTab>
            <PageTab><Text $size={24} $weight={600}>Metrics Explorer</Text></PageTab>
            <PageTab><Text $size={24} $weight={600} $ls={0.3}>Settings</Text></PageTab>
          </PageTabs>
          <ControlRow $h={85} $pr={36}>
            <Select $w={185}><Text $weight={350} $ls={0.12}>View: Hosts</Text><Chevron /></Select>
            <Search>
              <svg width="24" height="24" viewBox="0 0 16 16">
                <path fill={INK} d="M11.271 11.978l3.872 3.873a.502.502 0 00.708 0 .502.502 0 000-.708l-3.565-3.564c2.380-2.747 2.267-6.923-.342-9.532-2.730-2.730-7.170-2.730-9.898 0-2.728 2.729-2.728 7.170 0 9.900a6.955 6.955 0 004.949 2.050.5.5 0 000-1 5.960 5.960 0 01-4.242-1.757 6.010 6.010 0 010-8.486 6.004 6.004 0 018.484 0 6.010 6.010 0 010 8.486.5.5 0 00-.034.738z" />
              </svg>
              <Text $weight={350} $ls={0.13} $color="#69707d">Search for infrastructure data... (e.g. host.name:host-1)</Text>
            </Search>
            <DatePicker>
              <DateValue>
                <Svg w={22} h={23}>
                  <rect x=".8" y="3" width="20.400" height="19" rx="2" />
                  <path d="M.8 7h20.400M6.500 0v4.500M15.500 0v4.500" />
                  <path d="M4.800 11.300h12.500M4.800 14.700h12.500M4.800 18h12.500" strokeDasharray="3 1.700" />
                </Svg>
                <Text $weight={350} $ls={0.05} $color="#98a2b3">03/28/2022 8:45:19 PM</Text>
                <Spinner />
              </DateValue>
              <StopButton>
                <Svg w={12} h={18} c={BLUE}><path d="M.8 0v18M11.200 0v18" /></Svg>
                <Text $size={24} $ls={-0.15}>Stop refreshing</Text>
              </StopButton>
            </DatePicker>
          </ControlRow>
          <ControlRow $h={86} $pr={31.5}>
            <Select $w={252}><Text $weight={350}>Metric: CPU usage</Text><Chevron /></Select>
            <Select $w={195}><Text $weight={350}>Group By: All</Text><Chevron /></Select>
            <LinkButtons>
              <LinkButton>
                <Svg w={22} c={BLUE}>
                  <path d="M.8.8h16.500l3.900 4v16.400H.8zM6.500.8v6h8.200v-6" /><circle cx="11" cy="14" r="2.400" />
                </Svg>
                <Text $size={24} $ls={-0.4}>Save</Text>
              </LinkButton>
              <LinkButton>
                <Svg w={23} h={22} c={BLUE}>
                  <path d="M11.500 0v15M6.500 10.500l5 5 5-5M7.500 6.500H4L.9 17.500v2.200q0 1.500 1.500 1.500h18.200q1.500 0 1.500-1.500v-2.200L19 6.500h-3.500" />
                </Svg>
                <Text $size={24} $ls={-0.4}>Load</Text>
              </LinkButton>
            </LinkButtons>
          </ControlRow>
          <ViewRow>
            <ButtonGroup>
              <GroupButton $on $w={184} $pl={23}>
                <Svg w={18} c="none">
                  <g fill="#fff">
                    {[0, 7.5, 15].map((y) => [0, 7.5, 15].map((x) => <rect key={x + "," + y} x={x} y={y} width="3" height="3" />))}
                  </g>
                </Svg>
                <Text $size={24} $weight={500} $ls={-0.2}>Map view</Text>
              </GroupButton>
              <GroupButton $w={194} $pl={22}>
                <Svg w={18} h={15} c={BLUE}><path d="M5 1.500h13M5 7.500h13M5 13.500h13M0 1.500h2M0 7.500h2M0 13.500h2" /></Svg>
                <Text $size={24} $ls={-0.15}>Table view</Text>
              </GroupButton>
            </ButtonGroup>
            <Hint><Text $size={24}>Showing the last 10 seconds of data at the selected time</Text></Hint>
          </ViewRow>

          <MapArea>
            <MapScroll>
              <Group>
                <Tile name="RedTeamWeb-1" value="100%" fill="#6092c0" edge="#4479ae" />
                <Tile name="RedTeamWeb-2" value="1%" fill="#d3dae6" edge="#b0bfd8" />
                <Tile name="RedTeamWeb-3" value="1%" fill="#d3dae6" edge="#b0bfd8" />
              </Group>
            </MapScroll>
            <ScrollTrack>
              <Svg w={11} h={6} c="none"><path fill="#505050" d="M0 6L5.500 0 11 6z" /></Svg>
              <Thumb />
              <Svg w={11} h={6} c="none"><path fill="#505050" d="M0 0l5.500 6L11 0z" /></Svg>
            </ScrollTrack>
            <Legend>
              <Scale>
                <ScaleLabels>
                  <Text $size={16.5} $weight={350} $ls={-0.4}>1%</Text>
                  <Text $size={16.5} $weight={350} $ls={-0.3}>100%</Text>
                </ScaleLabels>
                <ScaleBar />
              </Scale>
              <Svg>
                <path d="M9.300.8h5.400l.9 3.300 2.500 1.400 3.300-.9 1.800 3.500-2 2.400v3l2 2.400-1.800 3.500-3.300-.9-2.500 1.400-.9 3.300H9.300l-.9-3.300-2.500-1.400-3.300.9-1.800-3.500 2-2.400v-3l-2-2.400 1.800-3.500 3.300.9 2.500-1.400z" strokeLinejoin="round" />
                <circle cx="12" cy="12" r="4.200" />
              </Svg>
            </Legend>
          </MapArea>
        </Main>
      </Body>

      <Taskbar>
        <Weather>
          <svg width="34" height="30" viewBox="0 0 34 30">
            <circle cx="15" cy="14.500" r="13.500" fill="#fbb024" />
            <circle cx="12" cy="11" r="8" fill="#ffd257" opacity=".7" />
            <path d="M17 27.500a5 5 0 01-.5-9.800 6.500 6.500 0 0112.300-.5A5.300 5.300 0 0128.500 27.500z" fill="#d4e6f6" />
          </svg>
          <Lines $lh={24}>
            <Text $size={17}>75°F</Text>
            <Text $size={17} $ls={0.18} $color="#c6c6c6">Mostly sunny</Text>
          </Lines>
        </Weather>
        <Apps>
          {appIcons.map((icon, i) => (
            <TaskApp key={i}>
              <AppTile $focus={i === 6}>
                <Glyph>{icon}</Glyph>
                {i >= 6 && <Pip $focus={i === 6} />}
              </AppTile>
            </TaskApp>
          ))}
        </Apps>
        <Tray>
          <Svg w={18} h={10} c="#fff"><path d="M.6 9.400L9 1l8.400 8.400" /></Svg>
          <TrayItem $ml={27}>
            <Svg w={24} h={16} c="none">
              <path fill="#a7a5a3" d="M4 13a5 5 0 011-8Q8 0 13 0.500q5 .5 6.500 5L10 14z" />
              <path fill="#fff" d="M3 16q-3-.5-3-3.500 3-3.500 6-2.500L16 6.500Q18 5 20 6.500q4 2 4 5 0 4.500-4 4.500z" />
            </Svg>
          </TrayItem>
          <TrayItem $ml={28}>
            <Svg w={16} h={24} c="#2d9bf0" sw={1.800}>
              <rect x="4" y="1" width="8" height="14.500" rx="4" /><path d="M.9 11q0 8 7.100 8t7.100-8M8 19v5" />
            </Svg>
          </TrayItem>
          <TrayItem $ml={31}>
            <Lines $align="center">
              <Text $size={17} $ls={0.1}>ENG</Text>
              <Text $size={17} $ls={0.3}>INTL</Text>
            </Lines>
          </TrayItem>
          <TrayItem $ml={26}>
            <Svg w={24} h={18} c="#fff" sw={1.700}>
              <path d="M.7 6.500q11.300-10.500 22.600 0M4 10.200q8-7.400 16 0M7.300 13.500q4.700-4.300 9.400 0" />
              <circle cx="12" cy="15.800" r="2" fill="#fff" stroke="none" />
            </Svg>
          </TrayItem>
          <TrayItem $ml={12}>
            <Svg w={24} h={20} c="#fff" sw={1.600}>
              <path d="M1 7h3.500L10 1.500v17L4.500 13.500H1zM13.500 6.500q2 3.500 0 7M16.700 3.800q4 6.200 0 12.400M19.700 1.200q6 8.800 0 17.600" />
            </Svg>
          </TrayItem>
          <TrayItem $ml={12}>
            <Svg w={24} h={16} c="#fff" sw={1.800}>
              <rect x=".9" y=".9" width="19.500" height="14.200" rx="3.500" />
              <rect x="3.500" y="3.500" width="14.300" height="9" rx="1" fill="#fff" stroke="none" />
              <path d="M22.500 5.500v5" strokeWidth="2.500" />
            </Svg>
          </TrayItem>
          <TrayItem $ml={24}>
            <Lines $align="flex-end">
              <Text $size={17} $ls={0.2}>8:45 PM</Text>
              <Text $size={17} $ls={0.28}>3/28/2022</Text>
            </Lines>
          </TrayItem>
          <Badge><Text $size={16}>1</Text></Badge>
        </Tray>
      </Taskbar>
    </Screen>
  );
}
